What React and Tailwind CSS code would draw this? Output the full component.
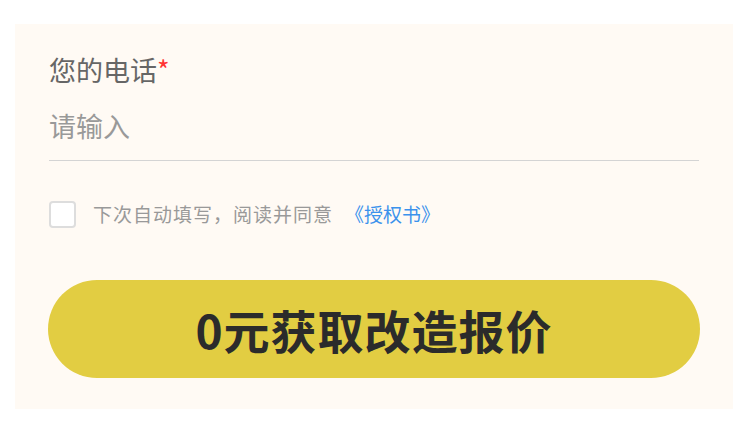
export default function App() {
  return (
    <div className="w-[750px] h-[427px] bg-white pt-[24px] pl-[15px] font-['Noto_Sans_CJK_SC',sans-serif]">
      <div className="w-[718px] h-[385px] bg-[#fffaf4] pl-[34px] pr-[34px] pt-[30px]">
        <div className="text-[27px] leading-[32px] text-[#666]">
          您的电话<span className="text-[#f33]">*</span>
        </div>
        <div className="mt-[24px] w-[650px] border-b border-[#d4d4d4] pb-[18px]">
          <input
            className="w-full h-[32px] bg-transparent outline-none text-[27px] leading-[32px] text-[#333] placeholder:text-[#999]"
            placeholder="请输入"
          />
        </div>
        <div className="mt-[40px] flex items-center h-[27px]">
          <div className="w-[27px] h-[27px] rounded-[4px] border-2 border-[#ddd] bg-white"></div>
          <span className="ml-[17px] text-[19px] tracking-[1px] text-[#999]">下次自动填写，阅读并同意</span>
          <span className="ml-[12px] text-[19px] text-[#3b92ec]">《授权书》</span>
        </div>
        <button className="mt-[52px] w-[652px] -ml-[1px] h-[98px] rounded-full bg-[#e2cd42] text-[46px] font-bold text-[#2b2b2b] tracking-[1px]">
          0元获取改造报价
        </button>
      </div>
    </div>
  );
}
